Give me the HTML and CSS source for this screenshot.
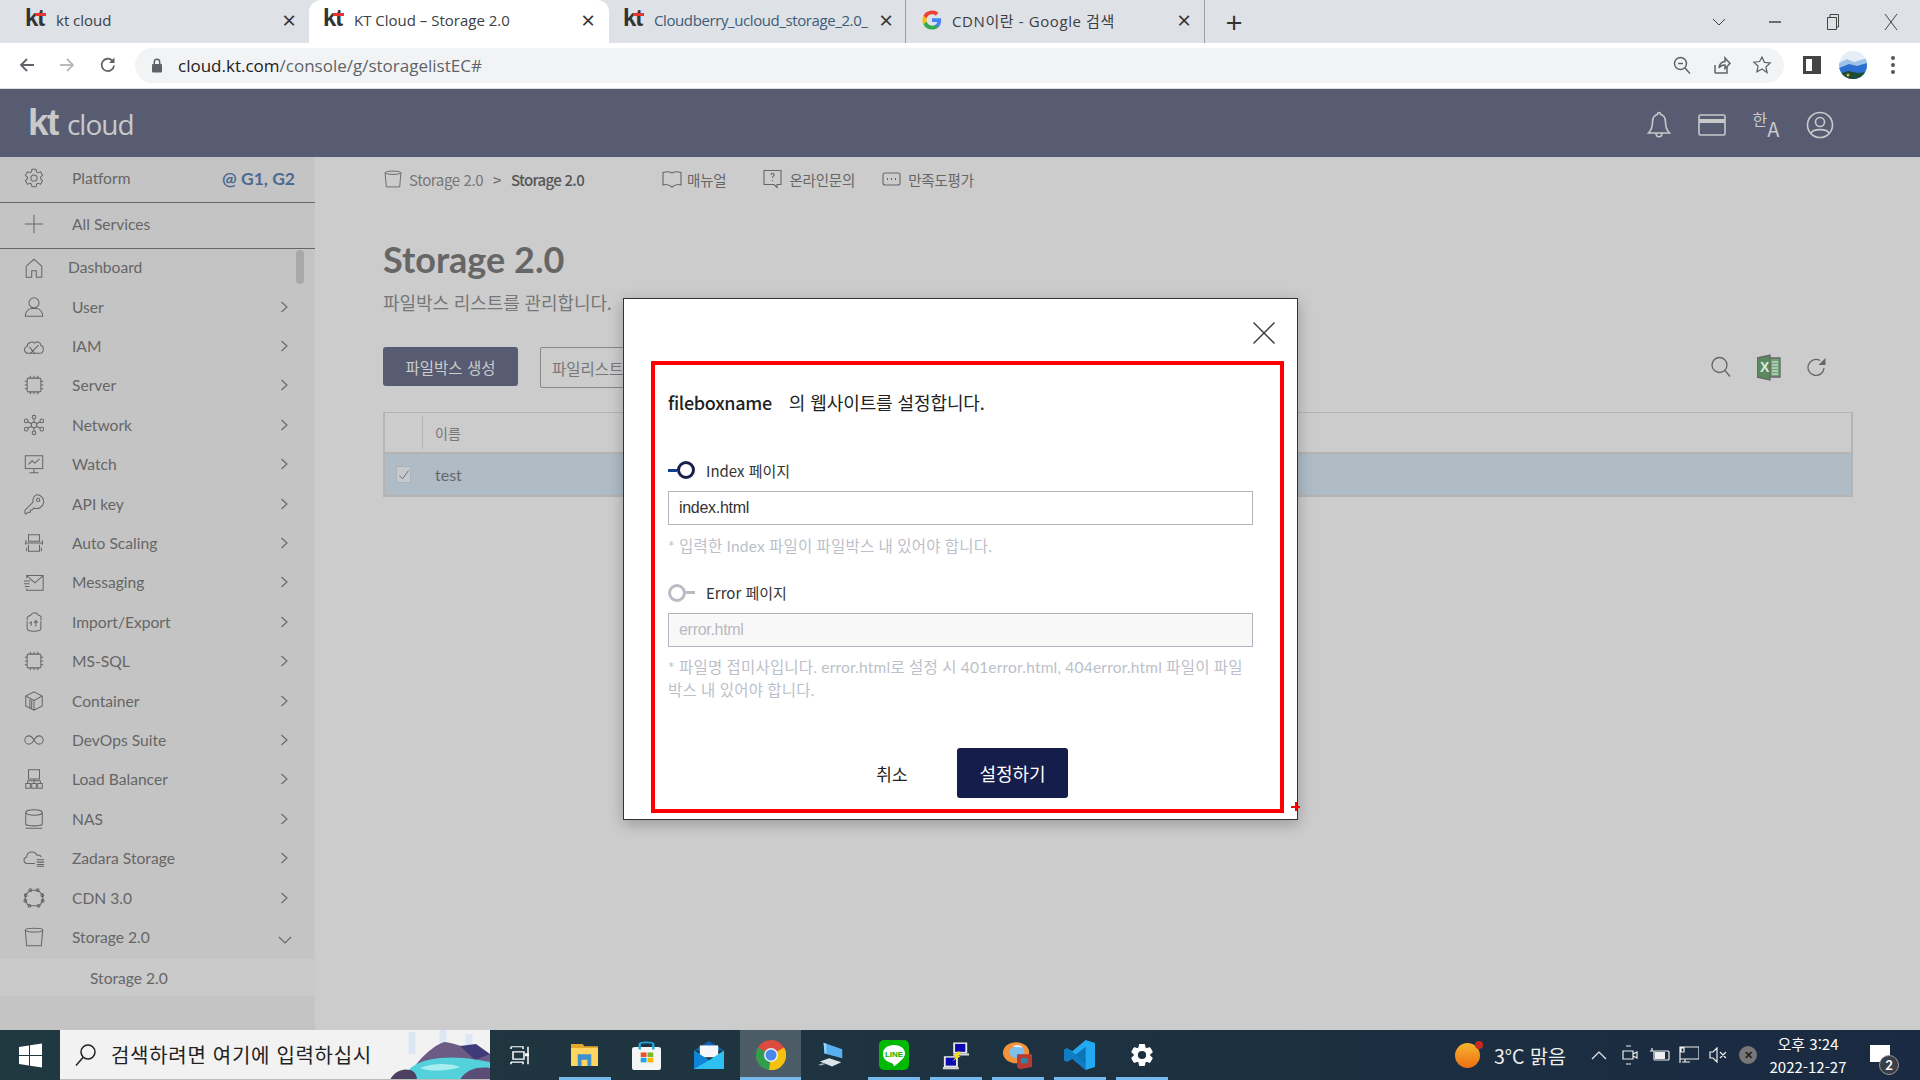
FILE: index.html
```html
<!DOCTYPE html>
<html lang="ko">
<head>
<meta charset="UTF-8">
<title>KT Cloud – Storage 2.0</title>
<link rel="stylesheet" href="styles.css">
</head>
<body>

<svg class="defs" width="0" height="0">
  <symbol id="chip" viewBox="0 0 24 24">
    <rect x="4.500" y="4.500" width="15" height="15" rx="1.500"/>
    <path d="M8 2v2.500M12 2v2.500M16 2v2.500M8 19.500V22M12 19.500V22M16 19.500V22M2 8h2.500M2 12h2.500M2 16h2.500M19.500 8H22M19.500 12H22M19.500 16H22"/>
  </symbol>
  <symbol id="bucket" viewBox="0 0 24 24">
    <ellipse cx="12" cy="4.500" rx="9.500" ry="2"/>
    <path d="M2.500 4.500 4 21.500h16l1.500-17"/>
  </symbol>
  <symbol id="gear" viewBox="0 0 24 24">
    <path d="M19.140 12.940c.04-.3.06-.61.06-.94 0-.32-.02-.64-.07-.94l2.030-1.580a.49.49 0 0 0 .12-.61l-1.920-3.320a.488.488 0 0 0-.59-.22l-2.390.96c-.5-.38-1.030-.7-1.620-.94l-.36-2.540a.484.484 0 0 0-.48-.41h-3.840c-.24 0-.43.17-.47.41l-.36 2.540c-.59.24-1.130.57-1.620.94l-2.390-.96c-.22-.08-.47 0-.59.22L2.740 8.870c-.12.21-.08.47.12.61l2.030 1.580c-.05.3-.09.63-.09.94s.02.64.07.94l-2.030 1.580a.49.49 0 0 0-.12.61l1.920 3.320c.12.22.37.29.59.22l2.390-.96c.5.38 1.030.7 1.620.94l.36 2.540c.05.24.24.41.48.41h3.840c.24 0 .44-.17.47-.41l.36-2.540c.59-.24 1.130-.56 1.620-.94l2.390.96c.22.08.47 0 .59-.22l1.920-3.320c.12-.22.07-.47-.12-.61l-2.010-1.580z"/>
    <circle cx="12" cy="12" r="3.400"/>
  </symbol>
  <symbol id="chev" viewBox="0 0 10 14">
    <path d="M2.500 2 8 7l-5.500 5"/>
  </symbol>
</svg>

<div class="tabstrip">
  <div class="tab tab-first">
    <span class="fav">kt<i></i></span>
    <span class="tab-title">kt cloud</span>
    <span class="tab-x">×</span>
  </div>
  <div class="tab tab-active">
    <span class="fav">kt<i></i></span>
    <span class="tab-title">KT Cloud – Storage 2.0</span>
    <span class="tab-x">×</span>
  </div>
  <div class="tab tab-third">
    <span class="fav">kt<i></i></span>
    <span class="tab-title tab-blue">Cloudberry_ucloud_storage_2.0_</span>
    <span class="tab-x">×</span>
  </div>
  <div class="tab tab-fourth">
    <svg class="gfav" width="20" height="20" viewBox="0 0 24 24">
      <path fill="#4285f4" d="M23 12.300c0-.8-.1-1.600-.2-2.300H12v4.400h6.200a5.300 5.300 0 0 1-2.300 3.500v2.900h3.700c2.200-2 3.400-5 3.400-8.500z"/>
      <path fill="#34a853" d="M12 23.500c3.100 0 5.700-1 7.600-2.800l-3.700-2.900c-1 .7-2.400 1.100-3.900 1.100-3 0-5.500-2-6.400-4.700H1.800v3A11.500 11.500 0 0 0 12 23.500z"/>
      <path fill="#fbbc05" d="M5.600 14.200a6.900 6.900 0 0 1 0-4.400v-3H1.800a11.500 11.500 0 0 0 0 10.400l3.800-3z"/>
      <path fill="#ea4335" d="M12 5.100c1.700 0 3.200.6 4.400 1.700l3.300-3.300A11.500 11.500 0 0 0 1.800 6.800l3.800 3C6.500 7.100 9 5.100 12 5.100z"/>
    </svg>
    <span class="tab-title">CDN이란 - Google 검색</span>
    <span class="tab-x">×</span>
  </div>
  <div class="new-tab">+</div>
  <div class="win-btns">
    <svg class="wb wb-chev" width="14" height="10" viewBox="0 0 14 10"><path d="M1 2l6 6 6-6"/></svg>
    <svg class="wb wb-min" width="12" height="10" viewBox="0 0 12 10"><path d="M0 5h12"/></svg>
    <svg class="wb wb-max" width="14" height="20" viewBox="0 0 14 20"><path d="M1.500 5.500h9v12h-9zM4 5V2.500h8.500V15H11"/></svg>
    <svg class="wb wb-close" width="16" height="20" viewBox="0 0 16 20"><path d="M2 2l12 16M14 2 2 18"/></svg>
  </div>
</div>

<div class="toolbar">
  <svg class="nav nav-back" width="18" height="18" viewBox="0 0 18 18"><path d="M16 9H3M9 3 3 9l6 6"/></svg>
  <svg class="nav nav-fwd" width="18" height="18" viewBox="0 0 18 18"><path d="M2 9h13M9 3l6 6-6 6"/></svg>
  <svg class="nav nav-reload" width="18" height="18" viewBox="0 0 18 18"><path d="M15 9.500A6.200 6.200 0 1 1 13.200 4.500"/><path class="nav-fill" d="M15.500 1.500v5.500H10z"/></svg>
  <div class="omnibox">
    <svg class="lock" width="12" height="15" viewBox="0 0 12 15"><rect x="1" y="6" width="10" height="8.500" rx="1"/><path class="lock-arc" d="M3.300 6V4a2.700 2.700 0 0 1 5.400 0v2"/></svg>
    <span class="url"><b>cloud.kt.com</b>/console/g/storagelistEC#</span>
    <svg class="omni-ic" width="20" height="20" viewBox="0 0 20 20"><circle cx="8.500" cy="8.500" r="6"/><path d="M13 13l5 5.500M6 8.500h5"/></svg>
    <svg class="omni-ic" width="20" height="20" viewBox="0 0 20 20"><path d="M3 18h12V12M3 18v-8M7 13c0-4 3-6.500 6-6.500V3l5 5.500-5 5V10c-3 0-5 1-6 3z"/></svg>
    <svg class="omni-ic" width="20" height="20" viewBox="0 0 24 24"><path d="M12 2.500l2.900 6.300 6.900.8-5.100 4.700 1.400 6.800L12 16.700l-6.100 3.400 1.400-6.800-5.100-4.700 6.900-.8z"/></svg>
  </div>
  <div class="sidepanel"><i></i></div>
  <svg class="avatar" width="28" height="28" viewBox="0 0 28 28">
    <defs><clipPath id="avc"><circle cx="14" cy="14" r="14"/></clipPath></defs>
    <g clip-path="url(#avc)">
      <rect width="28" height="28" fill="#e6eef8"/>
      <path d="M0 12l8-4 7 3 13-4v21H0z" fill="#9fc3e8"/>
      <path d="M0 17l10-4 8 2 10-3v16H0z" fill="#2d6fd0"/>
      <path d="M0 23l9-3 10 2 9-1v7H0z" fill="#1d4d36"/>
      <circle cx="9" cy="24" r="1.500" fill="#e2b23a"/>
    </g>
  </svg>
  <div class="kebab"><i></i><i></i><i></i></div>
</div>

<header class="app-head">
  <div class="logo"><span class="logo-kt">kt</span><span class="logo-cloud">cloud</span></div>
  <div class="head-icons">
    <svg width="26" height="28" viewBox="0 0 26 28"><path d="M13 1.500c1 0 1.500.8 1.500 1.800 3.500 1 5 4 5 7.700 0 5 1 8 4 11H2.500c3-3 4-6 4-11 0-3.700 1.500-6.700 5-7.700 0-1 .5-1.800 1.500-1.800z"/><path d="M10 22c0 5 6 5 6 0"/></svg>
    <svg width="28" height="22" viewBox="0 0 28 22"><rect x="1" y="1" width="26" height="20" rx="1.500"/><path class="head-band" d="M1 5h26v4H1z"/></svg>
    <span class="head-lang"><span class="lang-ko">한</span><span class="lang-en">A</span></span>
    <svg width="28" height="28" viewBox="0 0 28 28"><circle cx="14" cy="14" r="12.500"/><circle cx="14" cy="11" r="4.500"/><path d="M5 22c2-4.500 16-4.500 18 0"/></svg>
  </div>
</header>

<div class="main">
  <aside class="side">
    <div class="side-top">
      <svg class="si"><use href="#gear"/></svg>
      <span class="side-label">Platform</span>
      <span class="side-zone">@ G1, G2</span>
    </div>
    <div class="side-top">
      <svg class="si" viewBox="0 0 24 24"><path d="M12 2v20M2 12h20"/></svg>
      <span class="side-label">All Services</span>
    </div>
    <nav class="menu">
      <div class="thumb"></div>
      <div class="row row-dash">
        <svg class="si" viewBox="0 0 24 24"><path d="M3.500 22V10L12 2.500 20.500 10v12h-6v-7h-5v7z"/></svg>
        <span>Dashboard</span>
      </div>
      <div class="row">
        <svg class="si" viewBox="0 0 24 24"><circle cx="12" cy="7.500" r="5.500"/><path d="M2.500 22c0-5 3.500-8 6.500-8.500h6c3 .5 6.500 3.500 6.500 8.500z"/></svg>
        <span>User</span><svg class="chev"><use href="#chev"/></svg>
      </div>
      <div class="row">
        <svg class="si" viewBox="0 0 24 24"><path d="M6 20c-5 0-6-6-1.500-7.500C4.500 8.500 10 6 12.500 9c3-3 7-1 7 2.500 4 1 3.500 8.500-1 8.500z"/><path d="M7 13l5.500 7M17 11l-9 9"/></svg>
        <span>IAM</span><svg class="chev"><use href="#chev"/></svg>
      </div>
      <div class="row">
        <svg class="si"><use href="#chip"/></svg>
        <span>Server</span><svg class="chev"><use href="#chev"/></svg>
      </div>
      <div class="row">
        <svg class="si" viewBox="0 0 24 24"><circle cx="12" cy="12" r="3"/><circle cx="12" cy="3.500" r="2"/><circle cx="12" cy="20.500" r="2"/><circle cx="3.500" cy="7.500" r="2"/><circle cx="20.500" cy="7.500" r="2"/><circle cx="3.500" cy="16.500" r="2"/><circle cx="20.500" cy="16.500" r="2"/><path d="M12 5.500V9M12 15v3.500M5.300 8.400 9.300 10.700M18.700 8.400l-4 2.300M5.300 15.600l4-2.300M18.700 15.600l-4-2.300"/></svg>
        <span>Network</span><svg class="chev"><use href="#chev"/></svg>
      </div>
      <div class="row">
        <svg class="si" viewBox="0 0 24 24"><rect x="2.500" y="3" width="19" height="14"/><path d="M6 12.500l4-4 3 2.500 5-4.500M12 17v4M7 21.500h10"/></svg>
        <span>Watch</span><svg class="chev"><use href="#chev"/></svg>
      </div>
      <div class="row">
        <svg class="si" viewBox="0 0 24 24"><path d="M14.500 2a7.500 7.500 0 1 1-2.500 14.300L10 18.500H8v2.500H5.500L3 23l-1-1v-3l9-9A7.500 7.500 0 0 1 14.500 2z"/><circle cx="16.500" cy="7.500" r="1.800"/></svg>
        <span>API key</span><svg class="chev"><use href="#chev"/></svg>
      </div>
      <div class="row">
        <svg class="si" viewBox="0 0 24 24"><path d="M6 3h12v7H6zM2 12h20M3 9v5M21 9v5M6 14v7h12v-7M4 17v4M20 17v4"/></svg>
        <span>Auto Scaling</span><svg class="chev"><use href="#chev"/></svg>
      </div>
      <div class="row">
        <svg class="si" viewBox="0 0 24 24"><path d="M4 8V5h18v16H4v-2M4 5l9 8 9-8M1 11h7M1 14h6M2 17h5"/></svg>
        <span>Messaging</span><svg class="chev"><use href="#chev"/></svg>
      </div>
      <div class="row">
        <svg class="si" viewBox="0 0 24 24"><path d="M5 10C2.500 6 8 5 8.500 4.500 10 1 15 1 16 4c4 1 5 4 3 6M4.500 11v8c0 4 15 4 15 0v-8M9 16v-4l-2 1.500M12 13l2-2.500 2 2.500M14 11v6"/></svg>
        <span>Import/Export</span><svg class="chev"><use href="#chev"/></svg>
      </div>
      <div class="row">
        <svg class="si"><use href="#chip"/></svg>
        <span>MS-SQL</span><svg class="chev"><use href="#chev"/></svg>
      </div>
      <div class="row">
        <svg class="si" viewBox="0 0 24 24"><path d="M12 2l9 4.500v11L12 22l-9-4.500v-11zM3 6.500l9 5 9-5M12 11.500V22M7.500 10v9.500M9.500 11v9.500"/></svg>
        <span>Container</span><svg class="chev"><use href="#chev"/></svg>
      </div>
      <div class="row">
        <svg class="si" viewBox="0 0 24 24"><path d="M12 12C10 8.500 8.500 7.500 6.500 7.500a4.500 4.500 0 0 0 0 9c2 0 3.500-1 5.500-4.500zm0 0c2-3.500 3.500-4.500 5.500-4.500a4.500 4.500 0 0 1 0 9c-2 0-3.500-1-5.500-4.500z"/></svg>
        <span>DevOps Suite</span><svg class="chev"><use href="#chev"/></svg>
      </div>
      <div class="row">
        <svg class="si" viewBox="0 0 24 24"><path d="M6 2h12v10H6zM5 14h14M12 12v5M3 17h5v5H3zM9.500 17h5v5h-5zM16 17h5v5h-5zM5 14v3M19 14v3"/></svg>
        <span>Load Balancer</span><svg class="chev"><use href="#chev"/></svg>
      </div>
      <div class="row">
        <svg class="si" viewBox="0 0 24 24"><ellipse cx="12" cy="5" rx="9" ry="3"/><path d="M3 5v13c3 2 15 2 18 0V5M3 22h18"/></svg>
        <span>NAS</span><svg class="chev"><use href="#chev"/></svg>
      </div>
      <div class="row">
        <svg class="si" viewBox="0 0 24 24"><path d="M13 18H5c-5 0-5-6-1-7 0-6 9-8 11-2 2-.5 4 0 5 2M15 14h8M15 16.500h8M15 19h8M15 21h8"/></svg>
        <span>Zadara Storage</span><svg class="chev"><use href="#chev"/></svg>
      </div>
      <div class="row">
        <svg class="si" viewBox="0 0 24 24"><path d="M8 3.500h8L21 8l1 6-4 6.500H6L2 14l1-6z"/><circle cx="8" cy="3.500" r="1.500"/><circle cx="16" cy="3.500" r="1.500"/><circle cx="21" cy="9" r="1.500"/><circle cx="3" cy="9" r="1.500"/><circle cx="2.500" cy="15" r="1.500"/><circle cx="21.500" cy="15" r="1.500"/><circle cx="7" cy="20.500" r="1.500"/><circle cx="17" cy="20.500" r="1.500"/></svg>
        <span>CDN 3.0</span><svg class="chev"><use href="#chev"/></svg>
      </div>
      <div class="row">
        <svg class="si"><use href="#bucket"/></svg>
        <span>Storage 2.0</span>
        <svg class="chev-down" width="14" height="10" viewBox="0 0 14 10"><path d="M1 2l6 6 6-6"/></svg>
      </div>
      <div class="row-sub">Storage 2.0</div>
    </nav>
  </aside>

  <section class="content">
    <div class="crumbs">
      <svg class="crumb-ic"><use href="#bucket"/></svg>
      <span class="crumb">Storage 2.0</span>
      <span class="crumb-sep">&gt;</span>
      <span class="crumb crumb-now">Storage 2.0</span>
      <div class="crumb-links">
        <span class="crumb-link">
          <svg width="20" height="18" viewBox="0 0 20 18"><path d="M1 2.500c3-1 6-1 9 .5 3-1.500 6-1.500 9-.5V15c-3-1-6-.5-9 2-3-2.500-6-3-9-2z"/></svg>매뉴얼
        </span>
        <span class="crumb-link link-two">
          <svg width="19" height="20" viewBox="0 0 19 20"><path d="M1 1.500h17v14h-4v3l-3-3H1z"/><path d="M8 6c0-2.500 3.500-2 3 0-.3 1-1.500 1-1.500 3M9.500 11v1"/></svg>온라인문의
        </span>
        <span class="crumb-link link-three">
          <svg width="19" height="14" viewBox="0 0 19 14"><rect x="1" y="1" width="17" height="12" rx="2"/><path class="dots" d="M5 7h1M9 7h1M13 7h1"/></svg>만족도평가
        </span>
      </div>
    </div>
    <h1 class="title">Storage 2.0</h1>
    <p class="desc">파일박스 리스트를 관리합니다.</p>
    <div class="actions">
      <button class="btn-make">파일박스 생성</button>
      <button class="btn-list">파일리스트</button>
      <div class="tools">
        <svg width="20" height="22" viewBox="0 0 20 22"><circle cx="8.500" cy="9" r="7.500"/><path d="M14 14.500l5 6"/></svg>
        <svg width="24" height="27" viewBox="0 0 24 27">
          <path fill="#6ea273" d="M11 4h12v19H11z"/>
          <path fill="#5a8a5e" d="M0 4l13-3v25L0 23z"/>
          <path stroke="#c6d8c6" stroke-width="1.500" d="M15 8h6M15 11h6M15 14h6M15 17h6M15 20h6"/>
          <text class="xl" x="3" y="18">X</text>
        </svg>
        <svg width="20" height="22" viewBox="0 0 20 22"><path d="M17 12a8 8 0 1 1-4-7.500"/><path class="tool-fill" d="M18.500 2v7h-7z"/></svg>
      </div>
    </div>
    <div class="table">
      <div class="thead"><span class="th-check"></span><span class="th-name">이름</span></div>
      <div class="tbody">
        <span class="check"><svg width="12" height="12" viewBox="0 0 12 12"><path d="M1.500 6.500l3 3.500 6-8.500"/></svg></span>
        <span class="td-name">test</span>
      </div>
    </div>

    <div class="modal">
      <div class="modal-head">
        <svg class="modal-x" width="22" height="22" viewBox="0 0 22 22"><path d="M0.500 0.500l21 21M21.500 0.500l-21 21"/></svg>
      </div>
      <div class="red-box">
        <p class="modal-title"><strong>fileboxname</strong><span>의 웹사이트를 설정합니다.</span></p>
        <div class="radio-row radio-first">
          <span class="toggle toggle-on"><i></i><b></b></span>
          <label>Index 페이지</label>
        </div>
        <input class="field" type="text" value="index.html">
        <p class="hint hint-first">* 입력한 Index 파일이 파일박스 내 있어야 합니다.</p>
        <div class="radio-row radio-second">
          <span class="toggle toggle-off"><b></b><i></i></span>
          <label>Error 페이지</label>
        </div>
        <input class="field field-off" type="text" placeholder="error.html" disabled>
        <p class="hint hint-second">* 파일명 접미사입니다. error.html로 설정 시 401error.html, 404error.html 파일이 파일박스 내 있어야 합니다.</p>
        <div class="modal-btns">
          <button class="btn-cancel">취소</button>
          <button class="btn-ok">설정하기</button>
        </div>
      </div>
      <span class="red-plus"></span>
    </div>
  </section>
</div>

<footer class="taskbar">
  <div class="start">
    <svg width="25" height="25" viewBox="0 0 25 25"><path fill="#fff" d="M1 4l10-1.500v9.500H1zM12 2.300 24 .5V12H12zM1 13h10v9.500L1 21zM12 13h12v11.500l-12-1.800z"/></svg>
  </div>
  <div class="search">
    <svg class="search-ic" width="22" height="24" viewBox="0 0 22 24"><circle cx="13" cy="9" r="7"/><path d="M8 14.500 1 22.500"/></svg>
    <span class="search-text">검색하려면 여기에 입력하십시</span>
    <svg class="search-art" width="100" height="50" viewBox="0 0 100 50">
      <path d="M22 2v22M53 0v26M79 4v22" stroke="#c4d6f8" stroke-width="7" opacity=".45" fill="none"/>
      <path d="M16 50C26 30 45 14 55 12 70 14 85 22 100 24v26z" fill="#6b5b85"/>
      <path d="M100 24 86 14 70 16 85 30z" fill="#3f3a78"/>
      <path d="M12 50c6-14 18-20 38-22 20-2 40 2 50 4v8C85 38 75 45 70 50z" fill="#53d2dc"/>
      <path d="M30 38c12-5 30-5 40-1-10 4-30 5-40 1z" fill="#a6eef0"/>
      <path d="M70 50c4-8 14-14 30-12v12z" fill="#5b4d78"/>
      <path d="M0 50c4-8 12-12 20-10 5 1 7 6 7 10z" fill="#4c4160"/>
    </svg>
  </div>
  <div class="apps">
    <span class="app app-view">
      <svg width="20" height="19" viewBox="0 0 20 26" preserveAspectRatio="none"><path d="M1 1h12v3M1 1v3M3 8h11v10H3zM1 22h12v3M1 25v-3M18 1v24"/><rect class="white" x="15" y="10" width="4" height="4"/></svg>
    </span>
    <span class="app app-on">
      <svg width="27" height="22" viewBox="0 0 28 28" preserveAspectRatio="none"><path fill="#e2a72c" d="M0 0h12l2 3h14v22H0z"/><path fill="#ffd45f" d="M0 5h28v23H0z"/><path fill="#3d8fd1" d="M7 13h14v15h-4v-8h-6v8H7z"/></svg>
    </span>
    <span class="app">
      <svg width="29" height="29" viewBox="0 0 30 38" preserveAspectRatio="none"><rect y="8" width="30" height="30" rx="3" fill="#f5f5f5"/><path d="M8 11V4c0-3 14-3 14 0v7" fill="none" stroke="#22a7e0" stroke-width="2.500"/><rect x="9" y="15" width="6" height="6" fill="#e8532c"/><rect x="16" y="15" width="6" height="6" fill="#7ab829"/><rect x="9" y="22" width="6" height="6" fill="#1aa5e8"/><rect x="16" y="22" width="6" height="6" fill="#f7b500"/></svg>
    </span>
    <span class="app">
      <svg width="30" height="28" viewBox="0 0 31 38" preserveAspectRatio="none"><path fill="#0d64b3" d="M0 13 15.500 0 31 13z"/><path fill="#f4f8fb" d="M6 6h19v16H6z"/><path fill="#2fc0f2" d="M0 13l15.500 13L31 13v25H0z"/><path fill="#0f85d7" d="M0 13l15.500 13L0 38z"/></svg>
    </span>
    <span class="app app-chrome app-on">
      <svg width="30" height="30" viewBox="0 0 30 30">
        <circle cx="15" cy="15" r="15" fill="#dd4b3e"/>
        <path d="M15 15 2 7.500A15 15 0 0 0 13 30z" fill="#2f9f4f"/>
        <path d="M15 15l13-7.500A15 15 0 0 1 13 30z" fill="#f4c20d"/>
        <circle cx="15" cy="15" r="7" fill="#e8eef5"/>
        <circle cx="15" cy="15" r="5.500" fill="#4a87ea"/>
      </svg>
    </span>
    <span class="app">
      <svg width="28" height="26" viewBox="0 0 30 32" preserveAspectRatio="none"><path fill="#57b1f1" d="M6 1l20 8v11L7 14z"/><path fill="#94d5fb" d="M6 1l3 1 0 12-2 0z"/><path fill="#dbe4e8" d="M2 24l10-4 13 5-10 5z"/><path fill="#9fb0b8" d="M0 28l5-2 3 1-5 2z"/></svg>
    </span>
    <span class="app app-on">
      <svg width="30" height="30" viewBox="0 0 30 30"><rect width="30" height="30" rx="5" fill="#00b900"/><path fill="#fff" d="M15 5c7 0 11 4 11 8.500 0 5-7 9.500-11 13 0-2.500-2-3.500-4-4C6 21 4 17.500 4 13.500 4 9 8 5 15 5z"/><text class="line" x="15" y="16.500">LINE</text></svg>
    </span>
    <span class="app app-on">
      <svg width="28" height="29" viewBox="0 0 30 40" preserveAspectRatio="none"><path fill="#e8e8e8" d="M12 2h15v15H12z"/><path fill="#0a0ab0" d="M14 4h11v11H14z"/><path fill="#d8d8d8" d="M12 17h17v3H12z"/><path fill="#e8e8e8" d="M2 21h15v15H2z"/><path fill="#0a0ab0" d="M4 23h11v11H4z"/><path fill="#d8d8d8" d="M1 36h17v3H1z"/><path fill="#f5dd16" d="M17 14l4 1-4 5 3 1-9 7 4-6-3-1z"/></svg>
    </span>
    <span class="app app-on">
      <svg width="30" height="30" viewBox="0 0 32 40" preserveAspectRatio="none"><circle cx="14" cy="17" r="14" fill="#f2923a"/><path fill="#7cc0ee" d="M7 14c2-6 12-7 15-2 3 7-4 14-10 12-4-2-6-6-5-10z"/><path fill="#e8f5ff" d="M10 8c5-3 10-1 11 2-4-1-8 0-11-2z"/><path fill="#b63a33" d="M15 19h16v17l-13 3-3-3z"/><path fill="#2b88a6" d="M19 24h7v7h-7z"/></svg>
    </span>
    <span class="app app-on">
      <svg width="31" height="30" viewBox="0 0 30 40" preserveAspectRatio="none"><path fill="#23a9f2" d="M21 0l9 4v32l-9 4-13-15-5 4-3-2v-14l3-2 5 4z"/><path fill="#0a6fb4" d="M21 9 11 20l10 11z" opacity=".9"/><path fill="#0a6fb4" d="M0 13l3-2 18 18v11L8 25l-5 4-3-2z" opacity=".75"/></svg>
    </span>
    <span class="app app-on">
      <svg class="gear-app" width="26" height="26" viewBox="0 0 24 24"><use href="#gear"/><circle class="gear-hole" cx="12" cy="12" r="3.800"/></svg>
    </span>
  </div>
  <div class="tray">
    <span class="sun"><i></i></span>
    <span class="weather">3°C 맑음</span>
    <svg class="tray-ic tray-up" width="16" height="10" viewBox="0 0 16 10"><path d="M1 9l7-7 7 7"/></svg>
    <svg class="tray-ic tray-cam" width="16" height="20" viewBox="0 0 16 20"><path d="M4 1h5M4 19h5M1 6h10v8H1zM11 9l4-2v6l-4-2"/></svg>
    <svg class="tray-ic tray-bat" width="20" height="14" viewBox="0 0 20 14"><rect x="4" y="3" width="15" height="9" rx="1"/><path class="white" d="M5 4h10v7H5z"/><path d="M0 3h4M2 0v3"/></svg>
    <svg class="tray-ic tray-net" width="20" height="18" viewBox="0 0 20 18"><path d="M1 1h19v12H1zM1 1v16M6 13v3M3 16h8M2 2h3v4H2z"/></svg>
    <svg class="tray-ic tray-snd" width="18" height="16" viewBox="0 0 18 16"><path d="M1 5h3l4-4v14l-4-4H1zM11 5l6 6M17 5l-6 6"/></svg>
    <span class="tray-x">✕</span>
    <span class="clock"><span>오후 3:24</span><span>2022-12-27</span></span>
    <span class="notify"><i></i><b>2</b></span>
  </div>
</footer>

</body>
</html>
```

FILE: styles.css
```css
* {
  box-sizing: border-box;
}
html, body {
  margin: 0;
  padding: 0;
}
body {
  width: 1920px;
  height: 1080px;
  overflow: hidden;
  display: flex;
  flex-direction: column;
  font-family: Lato, "Noto Sans CJK KR", sans-serif;
  background: #ccc;
}
.defs {
  position: absolute;
}
p, h1 {
  margin: 0;
}

/* browser chrome */
.tabstrip {
  height: 43px;
  flex: none;
  display: flex;
  align-items: center;
  background: #dee1e6;
  font-family: "Open Sans", "Noto Sans CJK KR", sans-serif;
  font-size: 15px;
  color: #3c4043;
}
.tab {
  height: 43px;
  display: flex;
  align-items: center;
  position: relative;
}
.tab-first {
  width: 309px;
  padding: 0 13px 3px 25px;
}
.tab-active {
  width: 300px;
  padding: 0 14px 3px 14px;
  background: #fff;
  border-radius: 12px 12px 0 0;
}
.tab-third {
  width: 297px;
  padding: 0 12px 3px 14px;
  border-right: 1px solid #9aa0a6;
}
.tab-fourth {
  width: 299px;
  padding: 0 13px 3px 16px;
  border-right: 1px solid #9aa0a6;
}
.fav {
  width: 20px;
  margin-right: 11px;
  font: bold 24px/24px "Liberation Sans", sans-serif;
  letter-spacing: -1px;
  color: #333;
  position: relative;
  top: -2px;
  flex: none;
}
.fav i {
  position: absolute;
  left: 10px;
  top: 7px;
  width: 11px;
  height: 3px;
  background: #e8342e;
}
.gfav {
  flex: none;
  margin-right: 10px;
}
.tab-title {
  flex: 1;
  overflow: hidden;
  white-space: nowrap;
}
.tab-fourth .tab-title {
  letter-spacing: 0.6px;
}
.tab-blue {
  color: #3d5c78;
  letter-spacing: -0.4px;
}
.tab-x {
  flex: none;
  font-size: 24px;
  line-height: 24px;
  color: #333;
  width: 14px;
  text-align: center;
}
.new-tab {
  width: 38px;
  margin-left: 10px;
  text-align: center;
  font-size: 30px;
  line-height: 30px;
  color: #333;
}
.win-btns {
  margin-left: auto;
  display: flex;
  align-items: center;
  padding-right: 21px;
}
.wb {
  fill: none;
  stroke: #444;
  stroke-width: 1;
}
.wb-min {
  margin-left: 43px;
  stroke-width: 1.500;
}
.wb-max {
  margin-left: 45px;
}
.wb-close {
  margin-left: 43px;
}
.toolbar {
  height: 46px;
  flex: none;
  display: flex;
  align-items: center;
  background: #fff;
  border-bottom: 1px solid #dcdcdc;
  padding-bottom: 1px;
}
.nav {
  flex: none;
  fill: none;
  stroke: #5f6368;
  stroke-width: 1.800;
}
.nav-back {
  margin-left: 18px;
}
.nav-fwd {
  margin-left: 22px;
  stroke: #b6b9bd;
}
.nav-reload {
  margin-left: 23px;
}
.nav-fill {
  fill: #5f6368;
  stroke: none;
}
.omnibox {
  width: 1649px;
  height: 35px;
  margin-left: 18px;
  padding: 0 12px 0 16px;
  display: flex;
  align-items: center;
  background: #f1f3f4;
  border-radius: 18px;
}
.lock {
  flex: none;
  fill: #5f6368;
  stroke: none;
}
.lock-arc {
  fill: none;
  stroke: #5f6368;
  stroke-width: 1.500;
}
.url {
  margin-left: 15px;
  flex: 1;
  font-family: "Open Sans", sans-serif;
  font-size: 17px;
  color: #5f6368;
}
.url b {
  font-weight: normal;
  color: #202124;
}
.omni-ic {
  fill: none;
  stroke: #5f6368;
  stroke-width: 1.500;
  margin-left: 20px;
}
.sidepanel {
  width: 18px;
  height: 18px;
  margin-left: 19px;
  background: #444;
  padding: 3px 9px 3px 3px;
  flex: none;
}
.sidepanel i {
  display: block;
  height: 100%;
  background: #fff;
}
.avatar {
  flex: none;
  margin-left: 18px;
}
.kebab {
  margin-left: 24px;
  width: 4px;
  display: flex;
  flex-direction: column;
  gap: 3px;
  flex: none;
}
.kebab i {
  height: 4px;
  background: #555;
  border-radius: 50%;
}

/* kt cloud header */
.app-head {
  height: 68px;
  flex: none;
  display: flex;
  align-items: center;
  padding-left: 28px;
  background: #585c72;
}
.logo {
  display: flex;
  align-items: baseline;
  color: #c9c9c9;
}
.logo-kt {
  font: bold 37px/40px "Liberation Sans", sans-serif;
  letter-spacing: -1.500px;
}
.logo-cloud {
  margin-left: 9px;
  font: 28px/40px "Open Sans", sans-serif;
  letter-spacing: -1px;
}
.head-icons {
  margin-left: auto;
  padding: 4px 86px 0 0;
  display: flex;
  align-items: center;
  gap: 26px;
}
.head-icons svg {
  fill: none;
  stroke: #c9c9c9;
  stroke-width: 1.600;
}
.head-icons .head-band {
  fill: #c9c9c9;
  stroke: none;
}
.head-lang {
  width: 28px;
  height: 28px;
  display: flex;
  justify-content: center;
  color: #c9c9c9;
  font-family: "Noto Sans CJK KR", sans-serif;
}
.lang-ko {
  font-size: 16px;
  line-height: 17px;
}
.lang-en {
  align-self: flex-end;
  font-size: 20px;
  line-height: 20px;
}

/* layout */
.main {
  flex: 1;
  min-height: 0;
  display: flex;
  position: relative;
}
.side {
  width: 315px;
  flex: none;
  background: #c4c4c4;
  color: #666;
  font-size: 15.600px;
}
.side-top {
  height: 46px;
  display: flex;
  align-items: center;
  padding: 0 20px 3px 0;
  border-bottom: 1px solid #666;
}
.si {
  width: 22px;
  height: 22px;
  flex: none;
  margin-left: 23px;
  fill: none;
  stroke: #666;
  stroke-width: 1.100;
}
.side-label {
  margin-left: 27px;
}
.side-zone {
  margin-left: auto;
  color: #4d6a92;
  font-weight: bold;
  font-size: 17.500px;
}
.menu {
  position: relative;
}
.thumb {
  position: absolute;
  left: 296px;
  top: 1px;
  width: 8px;
  height: 34px;
  border-radius: 4px;
  background: #a8a8a8;
}
.row {
  height: 39.400px;
  display: flex;
  align-items: center;
}
.row span {
  margin-left: 27px;
  flex: 1;
}
.row-dash {
  height: 38px;
}
.row-dash span {
  margin: 0 0 3px 23px;
}
.chev {
  width: 10px;
  height: 14px;
  margin-right: 26px;
  fill: none;
  stroke: #666;
  stroke-width: 1.100;
}
.chev-down {
  margin-right: 23px;
  margin-top: 6px;
  fill: none;
  stroke: #666;
  stroke-width: 1.100;
}
.row-sub {
  height: 37px;
  margin-top: 2px;
  padding-left: 90px;
  line-height: 38px;
  background: #cacaca;
}
.content {
  flex: 1;
  padding: 0 67px 0 68px;
  color: #666;
}

/* page body */
.crumbs {
  height: 46px;
  padding-bottom: 2px;
  display: flex;
  align-items: center;
  font-size: 15px;
  letter-spacing: -0.4px;
  font-family: "Noto Sans CJK KR", sans-serif;
}
.crumb-ic {
  width: 20px;
  height: 20px;
  margin-right: 6px;
  fill: none;
  stroke: #666;
  stroke-width: 1.100;
}
.crumb {
  color: #777;
}
.crumb-sep {
  margin: 0 10px;
}
.crumb-now {
  font-weight: 500;
  color: #555;
  letter-spacing: -0.7px;
}
.crumb-links {
  margin-left: 78px;
  display: flex;
  font-size: 14.500px;
  letter-spacing: -0.2px;
}
.crumb-link {
  display: flex;
  align-items: center;
  gap: 5px;
}
.link-two {
  margin-left: 37px;
  gap: 7px;
}
.link-three {
  margin-left: 27px;
  gap: 7px;
}
.crumb-link svg {
  fill: none;
  stroke: #666;
  stroke-width: 1.100;
}
.crumb-link .dots {
  stroke-width: 2;
}
.title {
  margin-top: 31px;
  font-size: 36px;
  line-height: 50px;
  font-weight: bold;
  color: #666;
}
.desc {
  margin-top: 5px;
  font: 18px/26px "Noto Sans CJK KR", sans-serif;
  letter-spacing: -0.1px;
  color: #777;
}
.actions {
  margin-top: 32px;
  display: flex;
  align-items: flex-start;
}
.btn-make {
  width: 135px;
  height: 39px;
  border: 0;
  border-radius: 3px;
  background: #585c72;
  color: #ccc;
  font: 15.500px "Noto Sans CJK KR", sans-serif;
}
.btn-list {
  width: 140px;
  height: 41px;
  margin-left: 22px;
  padding-left: 11px;
  text-align: left;
  border: 1px solid #888;
  border-radius: 2px;
  background: none;
  color: #777;
  font: 15.500px "Noto Sans CJK KR", sans-serif;
}
.tools {
  margin: 1px 26px 0 auto;
  height: 38px;
  display: flex;
  align-items: center;
  gap: 26px;
}
.tools svg {
  fill: none;
  stroke: #666;
  stroke-width: 1.300;
}
.tools .tool-fill {
  fill: #666;
  stroke: none;
}
.tools .xl {
  fill: #dfe8df;
  stroke: none;
  font: bold 14px "Liberation Sans", sans-serif;
}
.table {
  margin-top: 24px;
  border: 2px solid #b4b4b4;
  border-top-width: 1px;
}
.thead {
  height: 41px;
  display: flex;
  align-items: center;
  border-bottom: 2px solid #b4b4b4;
}
.th-check {
  width: 38px;
  height: 33px;
  border-right: 1px solid #b4b4b4;
}
.th-name {
  margin-left: 12px;
  font: 14px "Noto Sans CJK KR", sans-serif;
  color: #777;
}
.tbody {
  height: 41px;
  display: flex;
  align-items: center;
  background: #afbcc6;
}
.check {
  width: 15px;
  height: 17px;
  margin-left: 11px;
  display: flex;
  align-items: center;
  justify-content: center;
  border: 1px solid #a9b4bd;
  background: #c5c9cc;
}
.check svg {
  fill: none;
  stroke: #778;
  stroke-width: 1;
}
.td-name {
  margin-left: 24px;
  font-size: 16px;
  color: #666;
}

/* modal */
.modal {
  position: absolute;
  left: 623px;
  top: 141px;
  width: 675px;
  height: 522px;
  padding: 0 13px 0 27px;
  background: #fff;
  border: 1px solid #333;
  box-shadow: 0 4px 14px rgba(0, 0, 0, 0.25);
  font-family: "Noto Sans CJK KR", sans-serif;
}
.modal-head {
  height: 62px;
  display: flex;
  justify-content: flex-end;
  padding: 23px 9px 0 0;
}
.modal-x {
  fill: none;
  stroke: #333;
  stroke-width: 1.300;
}
.red-box {
  height: 452px;
  padding: 0 13px 0 13px;
  border: 4px solid #f00;
}
.modal-title {
  padding-top: 22px;
  font-size: 18px;
  line-height: 30px;
  color: #222;
}
.modal-title strong {
  font-weight: 500;
  letter-spacing: -0.3px;
}
.modal-title span {
  margin-left: 17px;
  letter-spacing: -0.1px;
}
.radio-row {
  display: flex;
  align-items: center;
  height: 24px;
  font-size: 15px;
  color: #333;
}
.radio-first {
  margin-top: 41px;
}
.radio-second {
  margin-top: 22px;
}
.radio-row label {
  margin-left: 11px;
}
.toggle {
  width: 27px;
  display: flex;
  align-items: center;
  flex: none;
}
.toggle i {
  height: 3px;
  width: 10px;
}
.toggle b {
  width: 18px;
  height: 18px;
  border-radius: 50%;
  border: 3px solid;
  flex: none;
}
.toggle-on i {
  background: #15408e;
}
.toggle-on b {
  border-color: #16204a;
}
.toggle-off i {
  background: #bbbbc6;
  width: 9px;
}
.toggle-off b {
  border-color: #bbbbc6;
}
.field {
  display: block;
  width: 585px;
  height: 34px;
  margin-top: 9px;
  padding: 0 10px;
  border: 1px solid #b5b5c2;
  background: #fff;
  color: #333;
  font: 16px "Liberation Sans", sans-serif;
  letter-spacing: -0.3px;
  outline: none;
}
.field-off {
  margin-top: 8px;
  background: #f8f8f8;
}
.field-off::placeholder {
  color: #b9b9c0;
}
.hint {
  color: #bcbfc9;
  font-family: Lato, "Noto Sans CJK KR", sans-serif;
  font-size: 15.500px;
  line-height: 23.500px;
  letter-spacing: 0.2px;
}
.hint-first {
  margin-top: 10px;
}
.hint-second {
  margin-top: 9px;
  width: 580px;
}
.modal-btns {
  position: absolute;
  left: 0;
  right: 0;
  top: 449px;
  display: flex;
  align-items: center;
}
.btn-cancel {
  width: 60px;
  margin-left: 238px;
  border: 0;
  background: none;
  color: #222;
  font: 17px "Noto Sans CJK KR", sans-serif;
}
.btn-ok {
  width: 111px;
  height: 50px;
  margin-left: 35px;
  border: 0;
  border-radius: 3px;
  background: #151e4a;
  color: #fff;
  font: 18px "Noto Sans CJK KR", sans-serif;
}
.red-plus {
  position: absolute;
  left: 667px;
  top: 503px;
  width: 9px;
  height: 9px;
  background:
    linear-gradient(#f00, #f00) center / 9px 2px no-repeat,
    linear-gradient(#f00, #f00) center / 2px 9px no-repeat;
}

/* windows taskbar */
.taskbar {
  height: 50px;
  flex: none;
  display: flex;
  align-items: stretch;
  background: linear-gradient(90deg, #203840, #1e3440 40%, #1a2a42);
  color: #fff;
}
.start {
  width: 60px;
  display: flex;
  align-items: center;
  justify-content: center;
}
.search {
  width: 430px;
  display: flex;
  align-items: center;
  background: #f2f2f2;
  border-bottom: 1px solid #bbb;
  overflow: hidden;
  color: #222;
}
.search-ic {
  margin-left: 15px;
  fill: none;
  stroke: #222;
  stroke-width: 1.500;
}
.search-text {
  margin-left: 14px;
  font: 20px "Noto Sans CJK KR", sans-serif;
  white-space: nowrap;
  letter-spacing: 0.7px;
  flex: 1;
}
.search-art {
  flex: none;
}
.apps {
  display: flex;
  padding-left: 2px;
}
.app {
  width: 61.900px;
  display: flex;
  align-items: center;
  justify-content: center;
  position: relative;
}
.app-view svg {
  margin-right: 6px;
  fill: none;
  stroke: #fff;
  stroke-width: 1.500;
}
.app-view .white {
  fill: #fff;
  stroke: none;
}
.app-on::after {
  content: "";
  position: absolute;
  left: 5px;
  right: 5px;
  bottom: 0;
  height: 3px;
  background: #76b9ed;
}
.app-chrome {
  background: #4c5c66;
}
.app-chrome::after {
  left: 0;
  right: 0;
}
.gear-app {
  fill: #fff;
  stroke: #fff;
  stroke-width: 1;
}
.gear-app .gear-hole {
  fill: #1c2f41;
  stroke: none;
}
.line {
  fill: #00b900;
  font: bold 8px "Liberation Sans", sans-serif;
  text-anchor: middle;
}
.tray {
  margin-left: auto;
  display: flex;
  align-items: center;
  padding-right: 24px;
}
.sun {
  width: 25px;
  height: 25px;
  flex: none;
  border-radius: 50%;
  background: linear-gradient(#f4b52c, #ee6f14);
  position: relative;
}
.sun i {
  position: absolute;
  right: -3px;
  top: -2px;
  width: 8px;
  height: 8px;
  border-radius: 50%;
  background: #c9281e;
}
.weather {
  width: 75px;
  margin-left: 14px;
  font: 19.500px "Noto Sans CJK KR", sans-serif;
  white-space: nowrap;
  color: #eee;
}
.tray-ic {
  flex: none;
  fill: none;
  stroke: #eee;
  stroke-width: 1.200;
}
.tray-up {
  margin-left: 22px;
}
.tray-cam {
  margin-left: 15px;
}
.tray-bat {
  margin-left: 12px;
}
.tray-net {
  margin-left: 9px;
}
.tray-snd {
  margin-left: 10px;
}
.tray-ic .white {
  fill: #eee;
  stroke: none;
}
.tray-x {
  width: 18px;
  height: 18px;
  margin-left: 12px;
  border-radius: 50%;
  background: #777;
  color: #222;
  font-size: 11px;
  line-height: 18px;
  text-align: center;
  font-weight: bold;
}
.clock {
  width: 76px;
  margin-left: 13px;
  display: flex;
  flex-direction: column;
  align-items: center;
  font: 15px/23px "Noto Sans CJK KR", sans-serif;
  white-space: nowrap;
}
.notify {
  width: 26px;
  height: 30px;
  margin: 15px 0 0 24px;
  align-self: flex-start;
  position: relative;
}
.notify i {
  display: block;
  width: 20px;
  height: 17px;
  background: #fff;
}
.notify b {
  position: absolute;
  left: 9px;
  top: 10px;
  width: 20px;
  height: 20px;
  border-radius: 50%;
  background: #3a3f47;
  border: 1px solid #999;
  font-size: 13px;
  line-height: 18px;
  text-align: center;
}
```
